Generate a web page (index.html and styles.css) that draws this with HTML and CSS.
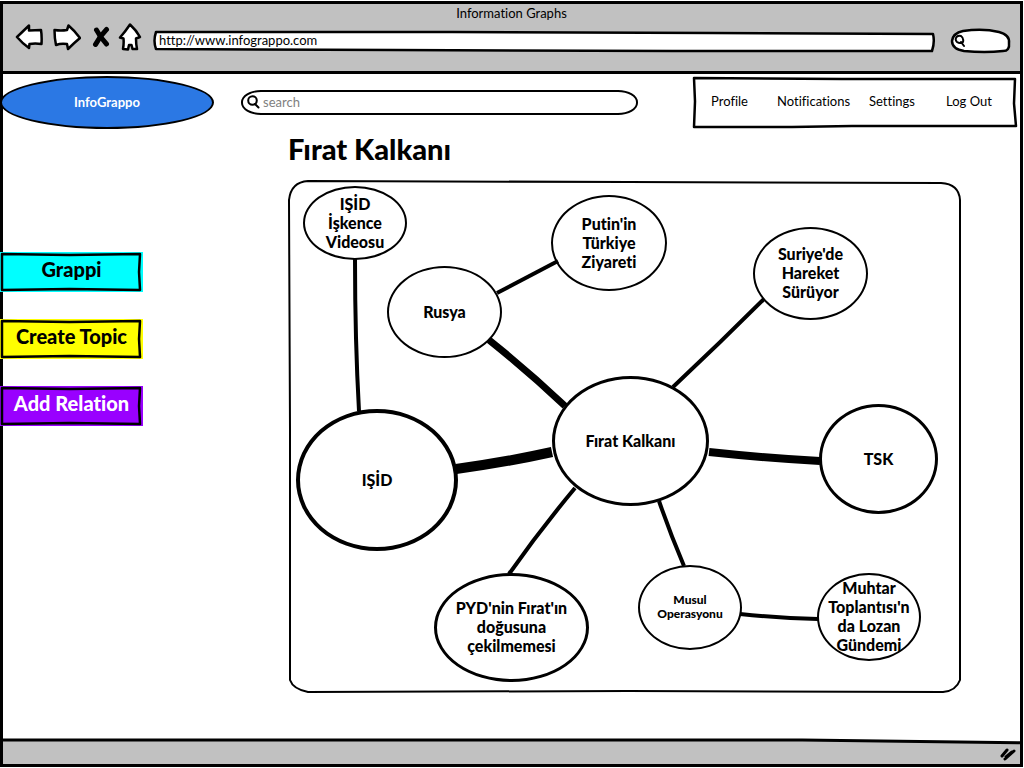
FILE: index.html
```
<!DOCTYPE html>
<html lang="tr">
<head>
<meta charset="utf-8">
<meta name="viewport" content="width=device-width, initial-scale=1">
<title>Information Graphs</title>
<link rel="stylesheet" href="styles.css">
</head>
<body>
<div class="window">
  <header class="chrome">
    <div class="chrome-title">Information Graphs</div>
    <div class="toolbar">
      <button class="tool" type="button" aria-label="Back"><svg width="28" height="28" viewBox="0 0 28 28"><path class="tool-shape" d="M2 14 L14 2.500 L14 7.500 L26 7 Q27 13 26.500 21 Q20 20 14.500 21 L14 25 Q7 20 2 14Z"/></svg></button>
      <button class="tool tool-forward" type="button" aria-label="Forward"><svg width="28" height="28" viewBox="0 0 28 28"><path class="tool-shape" d="M1.500 7 Q8 8 14 7 L15.500 2.500 Q22 8 27 15 Q21 20 15 26 L14 21 Q8 20 3 22 Q1.500 15 1.500 7Z"/></svg></button>
      <button class="tool tool-stop" type="button" aria-label="Stop"><svg width="18" height="22" viewBox="0 0 18 22"><path class="tool-cross" d="M4.500 4 Q8 11 14.500 18"/><path class="tool-cross" d="M14.500 3.500 Q8 10 3.500 18.500"/></svg></button>
      <button class="tool" type="button" aria-label="Home"><svg width="24" height="28" viewBox="0 0 24 28"><path class="tool-shape" d="M2 14.500 Q7 9 12 1.500 Q18 7 22 14 L18 15.500 Q18 21 19 26 L14.500 26 L13.500 22 L11 22 L10 26.500 L5 26 Q6 21 5.500 15.500Z"/></svg></button>
      <div class="address">
        <svg class="sketch" viewBox="0 0 784 22" preserveAspectRatio="none"><path class="line-url fill-white" d="M3 2 L300 2 L560 3 L781 4 Q783 12 780 21 L520 21 L240 20 L3 19 Q0 11 3 2Z"/></svg>
        <input class="address-input" type="text" aria-label="Address" value="http://www.infograppo.com">
      </div>
      <div class="quick">
        <svg class="sketch" viewBox="0 0 62 28" preserveAspectRatio="none"><path class="line-url fill-white" d="M13 4 Q33 1 49 5 Q60 8 59 16 Q60 24 53 24 Q35 26 14 24 Q2 22 2 14 Q3 6 13 4Z"/></svg>
        <svg class="quick-icon" width="12" height="14" viewBox="0 0 12 14"><path d="M2 4 Q3 1 7 2 Q10 4 9 8 Q6 10 3 8 Q1 6 2 4 M7 8 L10 12"/></svg>
        <input class="quick-input" type="search" aria-label="Web search">
      </div>
    </div>
  </header>

  <div class="page">
    <div class="topbar">
      <a class="logo" href="#">InfoGrappo</a>
      <label class="search">
        <svg class="search-icon" width="13" height="14" viewBox="0 0 13 14"><circle cx="5.500" cy="5.500" r="4.300"/><path d="M8 9 L11.500 12.500"/></svg>
        <input class="search-input" type="search" placeholder="search" aria-label="Search">
      </label>
      <nav class="menu">
        <svg class="sketch" viewBox="0 0 326 54" preserveAspectRatio="none"><path class="line-url" d="M2 2 L150 3 L323 3 L322 28 L324 51 L160 51 L100 52 L2 52 L3 26Z"/></svg>
        <a class="menu-link" href="#">Profile</a>
        <a class="menu-link" href="#">Notifications</a>
        <a class="menu-link" href="#">Settings</a>
        <a class="menu-link" href="#">Log Out</a>
      </nav>
    </div>

    <div class="body">
      <aside class="actions">
        <button class="action action-cyan" type="button"><svg class="sketch" viewBox="0 0 144 40" preserveAspectRatio="none"><path class="line-url" d="M2 2 L70 3 L141 2 L140 20 L141 38 L70 37 L2 38 L2 20Z"/></svg>Grappi</button>
        <button class="action action-yellow" type="button"><svg class="sketch" viewBox="0 0 144 40" preserveAspectRatio="none"><path class="line-url" d="M2 2 L70 3 L141 2 L140 20 L141 38 L70 37 L2 38 L2 20Z"/></svg>Create Topic</button>
        <button class="action action-purple" type="button"><svg class="sketch" viewBox="0 0 144 40" preserveAspectRatio="none"><path class="line-url" d="M2 2 L70 3 L141 2 L140 20 L141 38 L70 37 L2 38 L2 20Z"/></svg>Add Relation</button>
      </aside>

      <main class="topic">
        <h1 class="topic-title">Fırat Kalkanı</h1>
        <div class="map">
          <svg class="sketch" viewBox="0 0 674 514" preserveAspectRatio="none"><path class="line-thin" d="M1 20 Q3 2 20 1 L340 2 L653 3 Q671 4 672 20 L672 250 L672 500 Q668 511 655 512 L340 511 L20 512 Q5 509 2 500 L2 250Z"/></svg>
          <div class="canvas">
            <svg class="edges" width="674" height="514" viewBox="288 180 674 514">
              <g class="edge-thin">
                <path d="M355 259 Q355 340 359 411"/>
                <path d="M497 293 L558 261"/>
                <path d="M764 299 Q720 343 673 387"/>
                <path d="M575 488 Q540 530 509 574"/>
                <path d="M659 501 Q670 533 684 566"/>
                <path d="M740 614 Q780 618 818 619"/>
              </g>
              <path class="edge-mid" d="M489 340 Q529 372 565 406"/>
              <path class="edge-wide" d="M709 452 Q765 458 820 461"/>
              <path class="edge-widest" d="M456 469 Q507 462 552 452"/>
            </svg>
            <div class="node node-torture">IŞİD<br>İşkence<br>Videosu</div>
            <div class="node node-rusya">Rusya</div>
            <div class="node node-putin">Putin'in<br>Türkiye<br>Ziyareti</div>
            <div class="node node-suriye">Suriye'de<br>Hareket<br>Sürüyor</div>
            <div class="node node-firat">Fırat Kalkanı</div>
            <div class="node node-tsk">TSK</div>
            <div class="node node-isid">IŞİD</div>
            <div class="node node-pyd">PYD'nin Fırat'ın<br>doğusuna<br>çekilmemesi</div>
            <div class="node node-musul">Musul<br>Operasyonu</div>
            <div class="node node-muhtar">Muhtar<br>Toplantısı'n<br>da Lozan<br>Gündemi</div>
          </div>
        </div>
      </main>
    </div>
  </div>

  <footer class="statusbar">
    <svg class="sketch" viewBox="0 0 1018 27" preserveAspectRatio="none"><path class="fill-grey" d="M0 2 L800 2 L1018 5 L1018 27 L0 27Z"/><path class="line-medium" d="M0 2 L800 2 L1018 5"/></svg>
    <svg class="grip" width="16" height="14" viewBox="0 0 16 14"><path d="M2 9 L7 3 M5 12 L14 4 M6 10 L12 5"/></svg>
  </footer>
</div>
</body>
</html>
```
FILE: styles.css
```
* { box-sizing: border-box; }

body {
  margin: 0;
  padding: 1px 1px 1px 0;
  background: #fff;
  color: #000;
  font-family: Lato, "Noto Sans", sans-serif;
  font-size: 13px;
  line-height: 16px;
  font-variant-ligatures: none;
}

button, input { font: inherit; color: inherit; }
input { border: 0; outline: 0; background: transparent; padding: 0; min-width: 0; }
input[type="search"] { appearance: none; }
a { color: inherit; text-decoration: none; }

.window {
  display: flex;
  flex-direction: column;
  min-height: calc(100vh - 2px);
  border: 3px solid #000;
}

/* Hand-drawn outlines stretched over their box */
.sketch {
  position: absolute;
  inset: 0;
  width: 100%;
  height: 100%;
  overflow: visible;
  pointer-events: none;
}
.sketch path { fill: none; stroke: #000; stroke-linejoin: round; vector-effect: non-scaling-stroke; }
.sketch .line-thin { stroke-width: 2px; }
.sketch .line-url { stroke-width: 2.500px; }
.sketch .line-medium { stroke-width: 3px; }
.sketch .fill-white { fill: #fff; }
.sketch .fill-grey { fill: #c1c1c1; stroke: none; }

/* Browser chrome */
.chrome {
  height: 70px;
  padding-top: 1px;
  background: #c1c1c1;
  border-bottom: 3px solid #000;
}
.chrome-title { text-align: center; }
.toolbar {
  display: flex;
  align-items: center;
  height: 32px;
  padding: 0 8px 0 12px;
}
.tool { display: block; border: 0; padding: 0; background: none; }
.tool svg { display: block; }
.tool-forward { margin-left: 10px; }
.tool-stop { margin: 0 8px 0 11px; }
.tool-shape { fill: #fff; stroke: #000; stroke-width: 2.500px; stroke-linejoin: round; }
.tool-cross { fill: none; stroke: #000; stroke-width: 5px; stroke-linecap: round; }
.address {
  position: relative;
  flex: 1;
  display: flex;
  height: 22px;
  margin: 8px 14px 0 11px;
  padding: 0 6px 2px;
}
.address-input { position: relative; flex: 1; }
.quick {
  position: relative;
  display: flex;
  align-items: center;
  width: 62px;
  height: 28px;
  margin-top: 8px;
  padding: 0 8px 0 4px;
}
.quick-icon { position: relative; fill: none; stroke: #000; stroke-width: 2px; stroke-linecap: round; }
.quick-input { position: relative; flex: 1; }

/* Site header */
.page { flex: 1; padding-top: 2px; }
.topbar { display: flex; align-items: center; height: 53px; }
.logo {
  display: flex;
  align-items: center;
  justify-content: center;
  width: 214px;
  height: 53px;
  margin-left: -3px;
  padding-bottom: 2px;
  border: 2px solid #000;
  border-radius: 50%;
  background: #2b78e4;
  color: #fff;
  font-weight: 700;
}
.search {
  display: flex;
  align-items: center;
  flex: 0 1 397px;
  height: 25px;
  margin: 0 24px 0 27px;
  padding: 0 6px 2px 4px;
  border: 2px solid #000;
  border-radius: 20px / 12px;
}
.search-icon { fill: none; stroke: #000; stroke-width: 2px; stroke-linecap: round; }
.search-input { flex: 1; margin-left: 3px; }
.search-input::placeholder { color: #808080; opacity: 1; }
.menu {
  position: relative;
  display: grid;
  grid-template-columns: 66px 92px 77px auto;
  align-items: center;
  flex: none;
  width: 326px;
  height: 53px;
  margin: 0 2px 0 auto;
  padding: 0 8px 4px 19px;
}
.menu-link { position: relative; }

/* Side actions and topic */
.body { display: grid; grid-template-columns: 285px minmax(0, 1fr); }
.actions {
  display: flex;
  flex-direction: column;
  align-items: flex-start;
  gap: 27px;
  padding-top: 123px;
  margin-left: -3px;
}
.action {
  position: relative;
  width: 143px;
  height: 40px;
  border: 0;
  padding: 0 0 6px;
  font-size: 20px;
  font-weight: 900;
  line-height: 24px;
  white-space: nowrap;
}
.action-cyan { background: #0ff; }
.action-yellow { background: #ff0; }
.action-purple { background: #90f; color: #fff; }

.topic { padding: 4px 58px 44px 0; }
.topic-title { margin: 0 0 15px; font-size: 29px; font-weight: 900; line-height: 32px; }
.map { position: relative; min-height: 514px; }

/* Graph canvas: node positions are the content */
.canvas { position: relative; width: 674px; height: 514px; margin: 0 auto; }
.edges { display: block; fill: none; stroke: #000; }
.edge-thin { stroke-width: 4px; }
.edge-mid { stroke-width: 7px; }
.edge-wide { stroke-width: 8px; }
.edge-widest { stroke-width: 10px; }
.node {
  position: absolute;
  display: flex;
  align-items: center;
  justify-content: center;
  padding-bottom: 2px;
  border: 2px solid #000;
  border-radius: 50%;
  font-size: 16px;
  font-weight: 900;
  line-height: 19px;
  text-align: center;
  white-space: nowrap;
}
.node-torture { left: 15px; top: 6px; width: 104px; height: 74px; }
.node-rusya { left: 99px; top: 86px; width: 115px; height: 92px; }
.node-putin { left: 263px; top: 15px; width: 116px; height: 96px; }
.node-suriye { left: 465px; top: 47px; width: 115px; height: 93px; }
.node-firat { left: 264px; top: 196px; width: 157px; height: 130px; border-width: 3px; }
.node-tsk { left: 531px; top: 224px; width: 119px; height: 110px; border-width: 3px; }
.node-isid { left: 8px; top: 229px; width: 162px; height: 142px; border-width: 4px; }
.node-pyd { left: 146px; top: 393px; width: 155px; height: 109px; border-width: 3px; }
.node-musul { left: 350px; top: 385px; width: 104px; height: 85px; font-size: 12px; line-height: 14px; }
.node-muhtar { left: 529px; top: 393px; width: 104px; height: 88px; }

.statusbar { position: relative; height: 26px; display: flex; align-items: center; justify-content: flex-end; padding: 6px 4px 0; }
.grip { position: relative; fill: none; stroke: #000; stroke-width: 3px; stroke-linecap: round; }
```
